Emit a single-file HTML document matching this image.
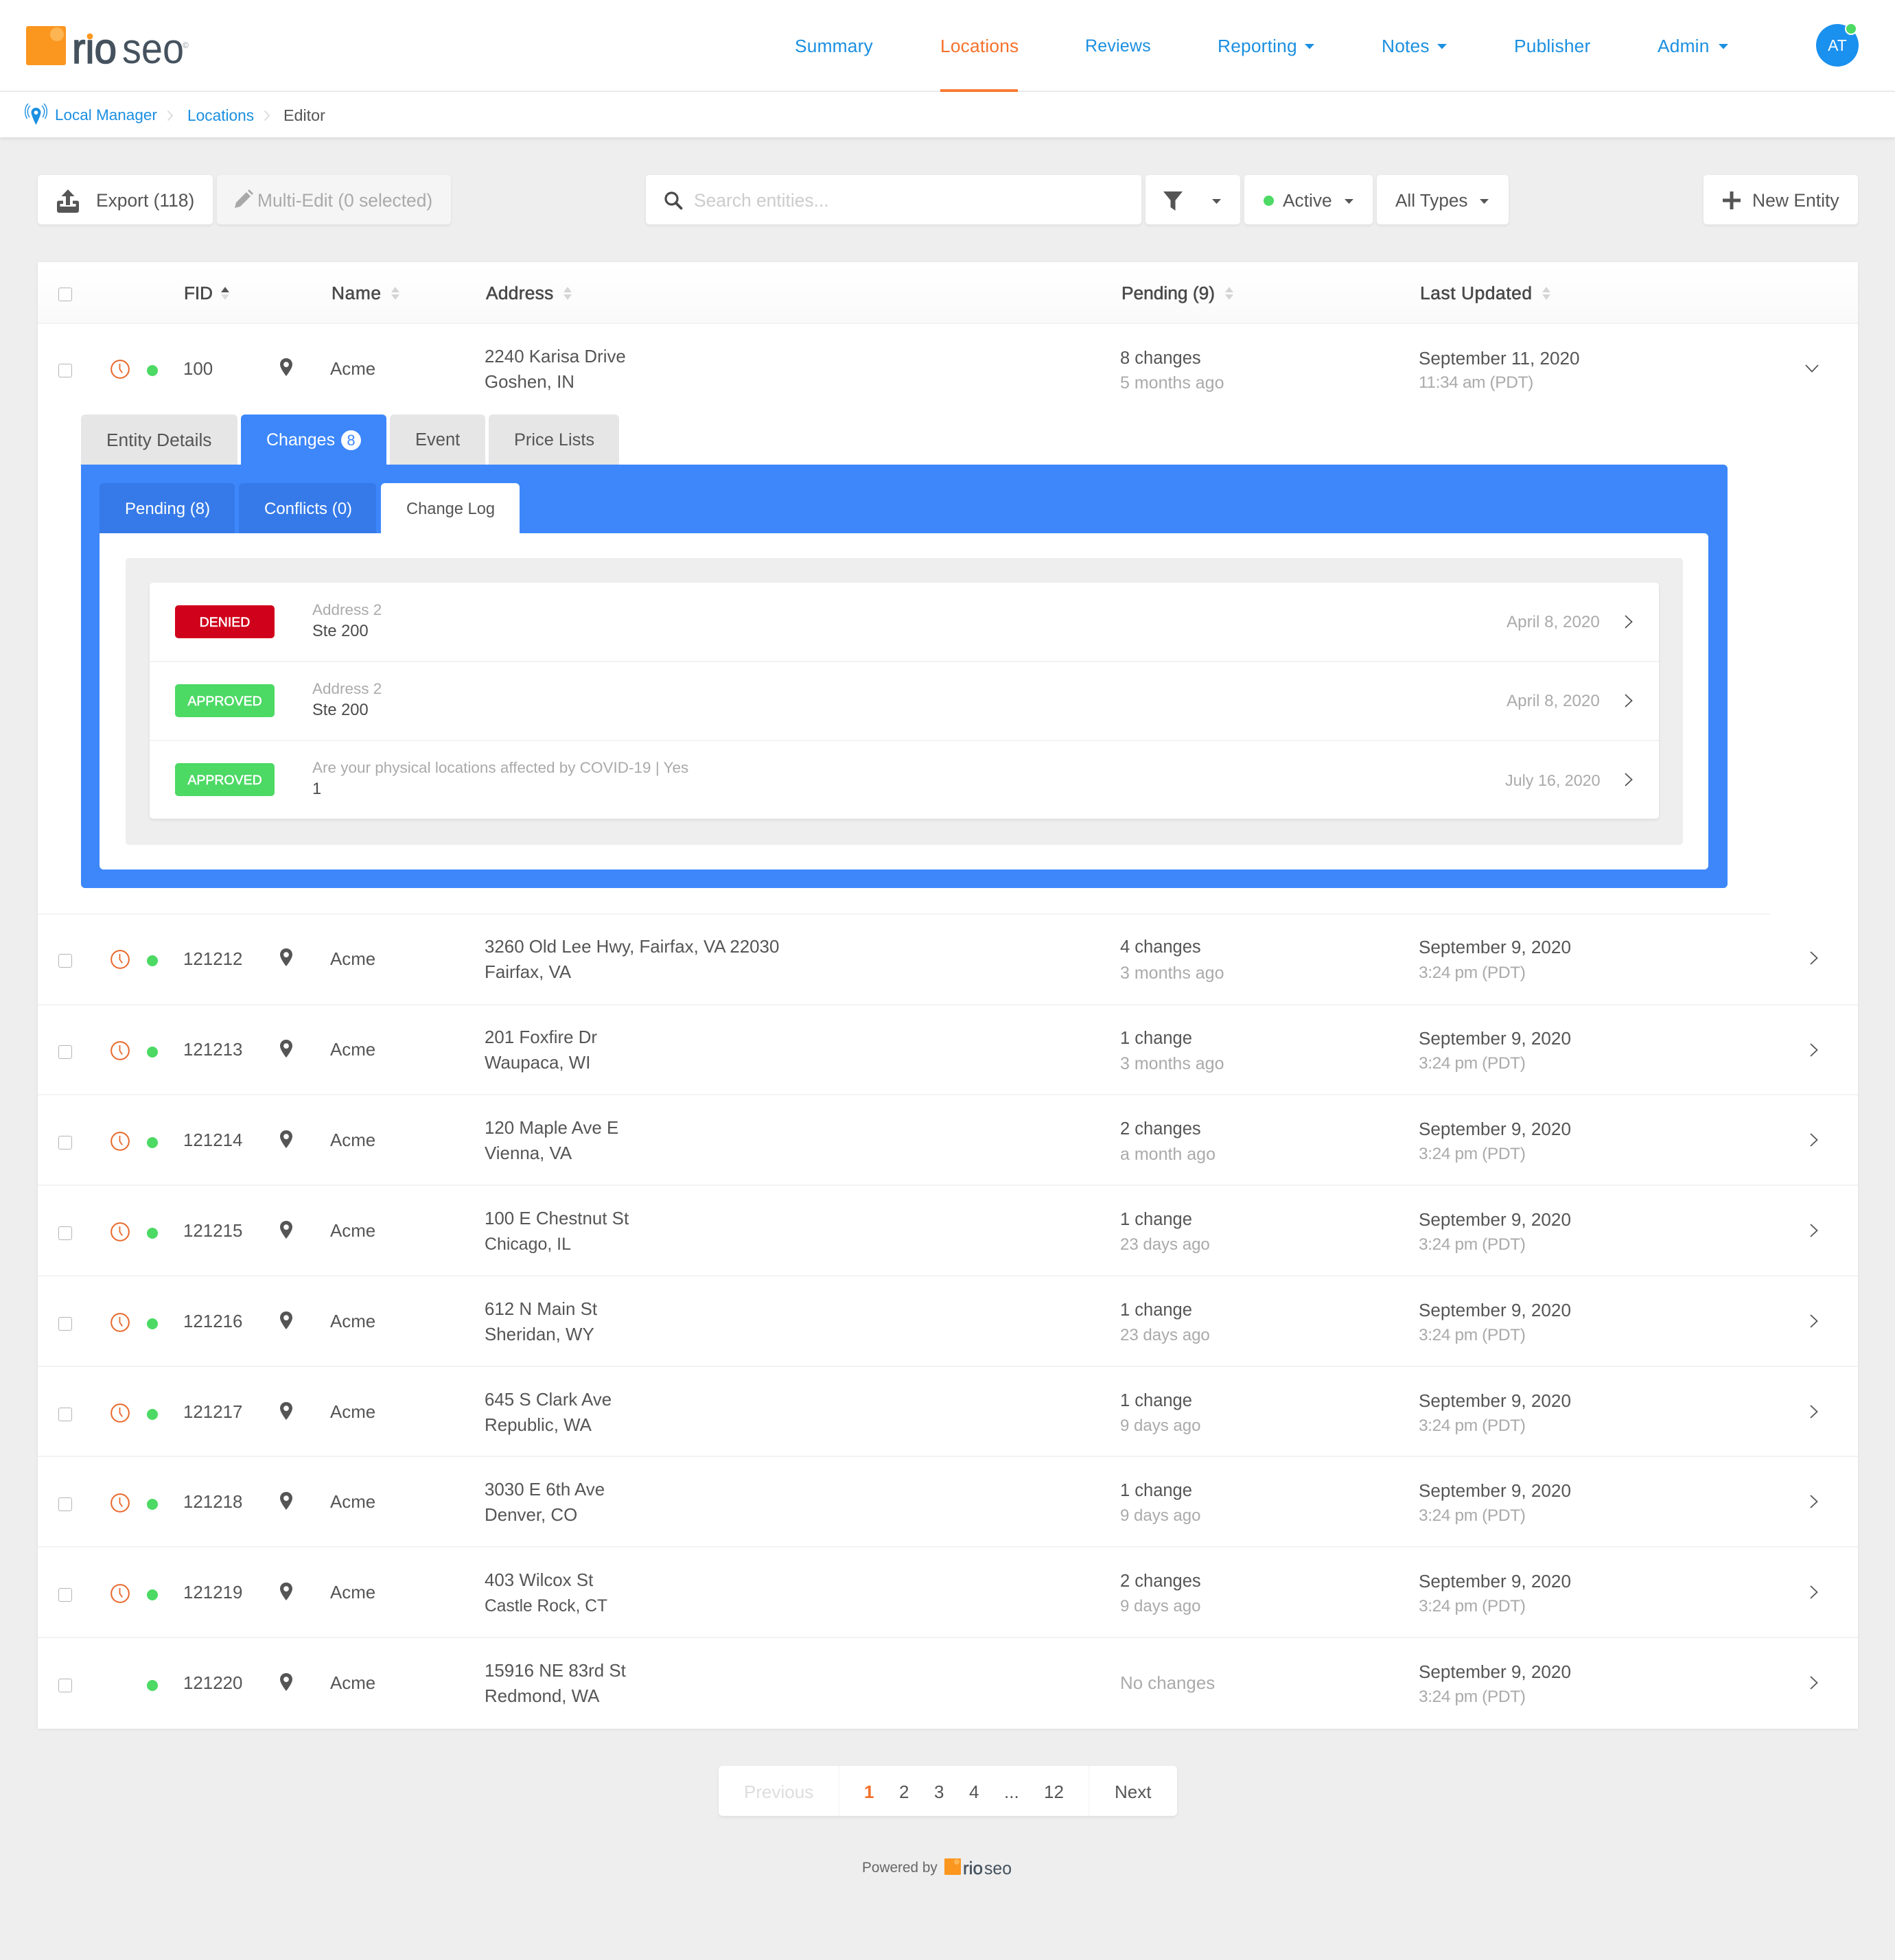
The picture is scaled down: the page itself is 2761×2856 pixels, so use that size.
<!DOCTYPE html>
<html lang="en"><head><meta charset="utf-8"><title>Locations Editor</title>
<style>
*{box-sizing:border-box}
html,body{margin:0;padding:0}
body{width:2761px;height:2856px;background:#eee;position:relative;overflow:hidden;font-family:"Liberation Sans",sans-serif;font-size:26px;color:#555}
.a{position:absolute}
.t{position:absolute;line-height:36px;height:36px;white-space:nowrap}
.btn{position:absolute;top:255px;height:72px;background:#fff;border-radius:5px;box-shadow:0 2px 5px rgba(0,0,0,.07)}
.nav{color:#1b8fe0;top:49px;font-size:26.3px;letter-spacing:.2px}
.bc{font-size:22.7px;top:150px;color:#1b8fe0}
.g{color:#aaa}
.h{top:409px;color:#4a4a4a;-webkit-text-stroke:.6px #4a4a4a;font-size:26.3px}
.cb{position:absolute;left:85px;width:20px;height:20px;border:1.5px solid #b5b5b5;border-radius:3px;background:#fff}
.row{position:absolute;left:55px;width:2652px;height:132px;border-top:2px solid #f3f3f3}
.row .t{font-size:25.9px}
.row .cb{left:30px;top:59px}
.row svg{position:absolute}
.clk{left:105px;top:52px}
.dot{position:absolute;left:159px;top:61px;width:16px;height:16px;border-radius:50%;background:#4cd964}
.fid{left:212px;top:48px}
.pin{left:352px;top:51px}
.nm{left:426px;top:48px}
.a1{left:651px;top:30px}
.a2{left:651px;top:67px}
.row .p1{left:1577px;top:31px;font-size:25.5px}
.row .p2{left:1577px;top:68px;color:#aaa;font-size:25px}
.row .d{font-size:24px}
.row .u1{left:2012px;top:31px;font-size:26.1px}
.row .u2{left:2012px;top:68px;color:#aaa;font-size:24.5px;letter-spacing:-.4px}
.chv{left:2581px;top:54px}
.tab{position:absolute;top:604px;height:73px;background:#e6e6e6;border-radius:6px 6px 0 0}
.sub{position:absolute;top:704px;height:73px;background:#357ae8;border-radius:6px 6px 0 0}
.bdg{position:absolute;left:255px;width:145px;height:48px;border-radius:5px;color:#fff;font-size:19.5px;line-height:50px;text-align:center;-webkit-text-stroke:.5px #fff}
.lb{left:455px;font-size:22.5px;color:#aaa}
.vl{left:455px;font-size:23.7px;color:#4a4a4a}
.dt{font-size:24.2px;color:#aaa}
</style></head>
<body>
<svg width="0" height="0" style="position:absolute">
<defs>
<symbol id="clock" viewBox="0 0 28 28"><circle cx="14" cy="14" r="12" fill="none" stroke="#e8692d" stroke-width="1.9"/><path d="M13.500 6.500V14l3.500 5" fill="none" stroke="#e8692d" stroke-width="1.700"/></symbol>
<symbol id="pin" viewBox="0 0 20 26"><path fill-rule="evenodd" fill="#555" d="M10 0C4.6 0 1 4 1 9c0 6 9 17 9 17s9-11 9-17c0-5-3.6-9-9-9zm0 5.2a3.9 3.9 0 1 1 0 7.8 3.9 3.9 0 0 1 0-7.8z"/></symbol>
<symbol id="right" viewBox="0 0 14 22"><path d="M2 2l9.500 9L2 20" fill="none" stroke="#555" stroke-width="1.800"/></symbol>
</defs>
</svg>

<!-- header -->
<div class="a" style="left:0;top:0;width:2761px;height:132px;background:#fff"></div>
<div class="a" style="left:0;top:132px;width:2761px;height:2px;background:#eee"></div>
<div class="a" style="left:0;top:134px;width:2761px;height:66px;background:#fff;box-shadow:0 2px 6px rgba(0,0,0,.09)"></div>

<svg class="a" style="left:30px;top:30px" width="260" height="80" viewBox="30 30 260 80">
<rect x="38" y="38" width="58" height="57" rx="3" fill="#fb961f"/>
<circle cx="83" cy="50" r="10" fill="#fcb552"/>
<text x="105" y="92" font-family="Liberation Sans" font-size="62" fill="#45525e" stroke="#45525e" stroke-width="1.6" textLength="65" lengthAdjust="spacingAndGlyphs">rio</text>
<rect x="124" y="40" width="14" height="16" fill="#fff"/>
<circle cx="131" cy="53" r="4.4" fill="#fb961f"/>
<text x="178" y="92" font-family="Liberation Sans" font-size="62" fill="#45525e" textLength="90" lengthAdjust="spacingAndGlyphs">seo</text>
<text x="266" y="70" font-family="Liberation Sans" font-size="12" fill="#8d959c">©</text>
</svg>

<span class="t nav" style="left:1158px">Summary</span>
<span class="t nav" style="left:1370px;color:#f5702a">Locations</span>
<div class="a" style="left:1370px;top:130px;width:113px;height:4px;background:#f97a32"></div>
<span class="t nav" style="left:1581px;font-size:25px">Reviews</span>
<span class="t nav" style="left:1774px">Reporting</span>
<svg class="a" style="left:1901px;top:64px" width="14" height="8"><path d="M0 0h14L7 7.500z" fill="#1b8fe0"/></svg>
<span class="t nav" style="left:2013px">Notes</span>
<svg class="a" style="left:2094px;top:64px" width="14" height="8"><path d="M0 0h14L7 7.500z" fill="#1b8fe0"/></svg>
<span class="t nav" style="left:2206px">Publisher</span>
<span class="t nav" style="left:2415px">Admin</span>
<svg class="a" style="left:2504px;top:64px" width="14" height="8"><path d="M0 0h14L7 7.500z" fill="#1b8fe0"/></svg>
<div class="a" style="left:2646px;top:35px;width:62px;height:62px;border-radius:50%;background:#1a90ef;color:#fff;font-size:23px;line-height:62px;text-align:center">AT</div>
<div class="a" style="left:2688px;top:33px;width:18px;height:18px;border-radius:50%;background:#4cd964;border:2px solid #fff"></div>

<!-- breadcrumb -->
<svg class="a" style="left:36px;top:150px" width="34" height="34" viewBox="0 0 34 34">
<path fill-rule="evenodd" fill="#1b8fe0" d="M16.500 7C12.500 7 9.500 10 9.500 13.800c0 4.500 7 18.200 7 18.200s7-13.700 7-18.200C23.500 10 20.500 7 16.500 7zm0 4.200a2.900 2.900 0 1 1 0 5.800 2.900 2.900 0 0 1 0-5.800z"/>
<path d="M7 21C3 15 3.500 8 8 4M3.500 23C-1 15 0 6 5 1M26 21c4-6 3.500-13-1-17M29.500 23c4.500-8 3.500-17-1.500-22" fill="none" stroke="#1b8fe0" stroke-width="1.400"/>
</svg>
<span class="t bc" style="left:80px;font-size:22.5px">Local Manager</span>
<svg class="a" style="left:243px;top:160px" width="10" height="17"><path d="M1.500 1.500l6.500 7-6.500 7" fill="none" stroke="#d5d5d5" stroke-width="1.600"/></svg>
<span class="t bc" style="left:273px">Locations</span>
<svg class="a" style="left:384px;top:160px" width="10" height="17"><path d="M1.500 1.500l6.500 7-6.500 7" fill="none" stroke="#d5d5d5" stroke-width="1.600"/></svg>
<span class="t bc" style="left:413px;color:#555;font-size:23.3px">Editor</span>

<!-- toolbar -->
<div class="btn" style="left:55px;width:255px"></div>
<svg class="a" style="left:81px;top:275px" width="36" height="36" viewBox="0 0 36 36">
<path fill="#555" d="M18 1l9.500 10H21v13h-6V11H8.500z"/>
<path fill="#555" d="M2 20a2.500 2.500 0 0 1 2.500-2.500H11V22H6.500v4h23v-4H25v-4.500h6.500A2.500 2.500 0 0 1 34 20v12a3 3 0 0 1-3 3H5a3 3 0 0 1-3-3z"/>
</svg>
<span class="t" style="left:140px;top:274px;font-size:26.4px">Export (118)</span>
<div class="btn" style="left:316px;width:341px;background:#f5f5f5"></div>
<svg class="a" style="left:341px;top:276px" width="28" height="28" viewBox="0 0 28 28"><path fill="#a8a8a8" d="M1 27l2-8L18 4l6 6L9 25zM20 2l2-2 6 6-2 2z"/></svg>
<span class="t g" style="left:375px;top:274px;font-size:26.4px">Multi-Edit (0 selected)</span>

<div class="btn" style="left:941px;width:722px"></div>
<svg class="a" style="left:967px;top:278px" width="28" height="28" viewBox="0 0 28 28"><circle cx="11.500" cy="11.500" r="8.500" fill="none" stroke="#4a4a4a" stroke-width="3.200"/><path d="M17.500 17.500l8 8" stroke="#4a4a4a" stroke-width="3.800" stroke-linecap="round"/></svg>
<span class="t" style="left:1011px;top:274px;color:#ccc;font-size:26.4px">Search entities...</span>

<div class="btn" style="left:1669px;width:138px"></div>
<svg class="a" style="left:1695px;top:279px" width="28" height="28" viewBox="0 0 28 28"><path fill="#555" d="M0 0h28L17.500 13v15l-7-5V13z"/></svg>
<svg class="a" style="left:1766px;top:290px" width="13" height="8"><path d="M0 0h13L6.500 7z" fill="#555"/></svg>

<div class="btn" style="left:1813px;width:187px"></div>
<div class="a" style="left:1841px;top:285px;width:15px;height:15px;border-radius:50%;background:#4cd964"></div>
<span class="t" style="left:1869px;top:274px;font-size:26.3px">Active</span>
<svg class="a" style="left:1959px;top:290px" width="13" height="8"><path d="M0 0h13L6.500 7z" fill="#555"/></svg>

<div class="btn" style="left:2006px;width:192px"></div>
<span class="t" style="left:2033px;top:274px;font-size:26.1px">All Types</span>
<svg class="a" style="left:2156px;top:290px" width="13" height="8"><path d="M0 0h13L6.500 7z" fill="#555"/></svg>

<div class="btn" style="left:2482px;width:225px"></div>
<svg class="a" style="left:2510px;top:279px" width="26" height="26" viewBox="0 0 26 26"><path fill="#555" d="M10.500 0h5v10.500H26v5H15.500V26h-5V15.500H0v-5h10.500z"/></svg>
<span class="t" style="left:2553px;top:274px;font-size:26.5px">New Entity</span>

<!-- table -->
<div class="a" style="left:55px;top:382px;width:2652px;height:2137px;background:#fff;box-shadow:0 1px 4px rgba(0,0,0,.08)"></div>
<div class="a" style="left:55px;top:382px;width:2652px;height:90px;background:linear-gradient(#fff,#fafafa);border-bottom:2px solid #f2f2f2"></div>
<div class="cb" style="top:419px"></div>
<span class="t h" style="left:268px;font-size:26px">FID</span>
<svg class="a" style="left:321px;top:418px" width="14" height="20"><path d="M7 0l6 8H1z" fill="#555"/><path d="M7 19l6-8H1z" fill="#ddd"/></svg>
<span class="t h" style="left:483px;letter-spacing:.6px">Name</span>
<svg class="a" style="left:569px;top:418px" width="14" height="20"><path d="M7 0l6 8H1z" fill="#d5d5d5"/><path d="M7 19l6-8H1z" fill="#d5d5d5"/></svg>
<span class="t h" style="left:708px;letter-spacing:.3px">Address</span>
<svg class="a" style="left:820px;top:418px" width="14" height="20"><path d="M7 0l6 8H1z" fill="#d5d5d5"/><path d="M7 19l6-8H1z" fill="#d5d5d5"/></svg>
<span class="t h" style="left:1634px">Pending (9)</span>
<svg class="a" style="left:1784px;top:418px" width="14" height="20"><path d="M7 0l6 8H1z" fill="#d5d5d5"/><path d="M7 19l6-8H1z" fill="#d5d5d5"/></svg>
<span class="t h" style="left:2069px;letter-spacing:.6px">Last Updated</span>
<svg class="a" style="left:2246px;top:418px" width="14" height="20"><path d="M7 0l6 8H1z" fill="#d5d5d5"/><path d="M7 19l6-8H1z" fill="#d5d5d5"/></svg>

<!-- row 1 -->
<div class="row" style="top:471px;border-top:0">
<div class="cb"></div>
<svg class="clk" width="30" height="30"><use href="#clock"/></svg>
<div class="dot"></div>
<span class="t fid" style="top:49px">100</span>
<svg class="pin" width="20" height="26"><use href="#pin"/></svg>
<span class="t nm" style="top:49px">Acme</span>
<span class="t a1" style="top:31px">2240 Karisa Drive</span><span class="t a2" style="top:68px">Goshen, IN</span>
<span class="t p1" style="top:33px">8 changes</span><span class="t p2" style="top:69px">5 months ago</span>
<span class="t u1" style="top:33px">September 11, 2020</span><span class="t u2" style="top:69px">11:34 am (PDT)</span>
<svg style="left:2575px;top:60px" width="20" height="12" viewBox="0 0 20 12"><path d="M1 1l9 9.500L19 1" fill="none" stroke="#555" stroke-width="1.800"/></svg>
</div>

<!-- top tabs -->
<div class="tab" style="left:118px;width:228px"></div>
<span class="t" style="left:155px;top:623px;font-size:26.3px">Entity Details</span>
<div class="tab" style="left:351px;width:212px;background:#3d87fb"></div>
<span class="t" style="left:388px;top:623px;color:#fff;font-size:25px">Changes</span>
<div class="a" style="left:497px;top:627px;width:29px;height:29px;border-radius:50%;background:#fff;color:#3d87fb;font-size:22px;line-height:29px;text-align:center">8</div>
<div class="tab" style="left:568px;width:139px"></div>
<span class="t" style="left:605px;top:623px;font-size:25.5px">Event</span>
<div class="tab" style="left:712px;width:190px"></div>
<span class="t" style="left:749px;top:623px;font-size:25.4px">Price Lists</span>

<!-- blue panel -->
<div class="a" style="left:118px;top:677px;width:2399px;height:617px;background:#3d87fb;border-radius:0 6px 6px 6px"></div>
<div class="sub" style="left:145px;width:197px"></div>
<span class="t" style="left:182px;top:724px;color:#fff;font-size:24px">Pending (8)</span>
<div class="sub" style="left:348px;width:200px"></div>
<span class="t" style="left:385px;top:724px;color:#fff;font-size:24px">Conflicts (0)</span>
<div class="sub" style="left:555px;width:202px;background:#fff"></div>
<span class="t" style="left:592px;top:724px;font-size:23.7px">Change Log</span>
<div class="a" style="left:145px;top:777px;width:2344px;height:490px;background:#fff;border-radius:0 6px 6px 6px"></div>
<div class="a" style="left:183px;top:813px;width:2269px;height:418px;background:#eee;border-radius:5px"></div>
<div class="a" style="left:218px;top:849px;width:2199px;height:344px;background:#fff;border-radius:5px;box-shadow:0 2px 5px rgba(0,0,0,.08)"></div>
<div class="a" style="left:218px;top:963px;width:2199px;height:2px;background:#f3f3f3"></div>
<div class="a" style="left:218px;top:1078px;width:2199px;height:2px;background:#f3f3f3"></div>

<div class="bdg" style="top:882px;background:#d0021b">DENIED</div>
<span class="t lb" style="top:871px">Address 2</span>
<span class="t vl" style="top:902px">Ste 200</span>
<span class="t dt" style="left:2195px;top:889px">April 8, 2020</span>
<svg class="a" style="left:2366px;top:895px" width="14" height="22"><use href="#right"/></svg>

<div class="bdg" style="top:997px;background:#4cd964">APPROVED</div>
<span class="t lb" style="top:986px">Address 2</span>
<span class="t vl" style="top:1017px">Ste 200</span>
<span class="t dt" style="left:2195px;top:1004px">April 8, 2020</span>
<svg class="a" style="left:2366px;top:1010px" width="14" height="22"><use href="#right"/></svg>

<div class="bdg" style="top:1112px;background:#4cd964">APPROVED</div>
<span class="t lb" style="top:1101px">Are your physical locations affected by COVID-19 | Yes</span>
<span class="t vl" style="top:1132px">1</span>
<span class="t dt" style="left:2193px;top:1119px;font-size:23.3px">July 16, 2020</span>
<svg class="a" style="left:2366px;top:1125px" width="14" height="22"><use href="#right"/></svg>

<!-- rows -->
<div class="row" style="top:1331px;border-top:0"><div class="a" style="left:0;top:0;width:2524px;height:2px;background:#f3f3f3"></div>
<div class="cb"></div><svg class="clk" width="30" height="30"><use href="#clock"/></svg><div class="dot"></div><span class="t fid" style="top:49px">121212</span><svg class="pin" width="20" height="26"><use href="#pin"/></svg><span class="t nm" style="top:49px">Acme</span>
<span class="t a1" style="top:31px">3260 Old Lee Hwy, Fairfax, VA 22030</span><span class="t a2" style="top:68px">Fairfax, VA</span><span class="t p1">4 changes</span><span class="t p2" style="top:69px">3 months ago</span><span class="t u1">September 9, 2020</span><span class="t u2" style="top:69px">3:24 pm (PDT)</span>
<svg class="chv" width="14" height="22"><use href="#right"/></svg></div>

<div class="row" style="top:1463px">
<div class="cb" style="top:58px"></div><svg class="clk" style="top:51px" width="30" height="30"><use href="#clock"/></svg><div class="dot" style="top:60px"></div><span class="t fid" style="top:47px">121213</span><svg class="pin" style="top:50px" width="20" height="26"><use href="#pin"/></svg><span class="t nm" style="top:47px">Acme</span>
<span class="t a1" style="top:29px">201 Foxfire Dr</span><span class="t a2" style="top:66px">Waupaca, WI</span><span class="t p1" style="top:30px">1 change</span><span class="t p2" style="top:67px">3 months ago</span><span class="t u1" style="top:30px">September 9, 2020</span><span class="t u2" style="top:67px">3:24 pm (PDT)</span>
<svg class="chv" width="14" height="22"><use href="#right"/></svg></div>

<div class="row" style="top:1594px">
<div class="cb"></div><svg class="clk" width="30" height="30"><use href="#clock"/></svg><div class="dot"></div><span class="t fid">121214</span><svg class="pin" width="20" height="26"><use href="#pin"/></svg><span class="t nm">Acme</span>
<span class="t a1">120 Maple Ave E</span><span class="t a2">Vienna, VA</span><span class="t p1">2 changes</span><span class="t p2">a month ago</span><span class="t u1">September 9, 2020</span><span class="t u2">3:24 pm (PDT)</span>
<svg class="chv" width="14" height="22"><use href="#right"/></svg></div>

<div class="row" style="top:1726px">
<div class="cb"></div><svg class="clk" width="30" height="30"><use href="#clock"/></svg><div class="dot"></div><span class="t fid">121215</span><svg class="pin" width="20" height="26"><use href="#pin"/></svg><span class="t nm">Acme</span>
<span class="t a1">100 E Chestnut St</span><span class="t a2" style="font-size:24.9px">Chicago, IL</span><span class="t p1">1 change</span><span class="t p2 d">23 days ago</span><span class="t u1">September 9, 2020</span><span class="t u2">3:24 pm (PDT)</span>
<svg class="chv" width="14" height="22"><use href="#right"/></svg></div>

<div class="row" style="top:1858px">
<div class="cb"></div><svg class="clk" width="30" height="30"><use href="#clock"/></svg><div class="dot"></div><span class="t fid">121216</span><svg class="pin" width="20" height="26"><use href="#pin"/></svg><span class="t nm">Acme</span>
<span class="t a1">612 N Main St</span><span class="t a2">Sheridan, WY</span><span class="t p1">1 change</span><span class="t p2 d">23 days ago</span><span class="t u1">September 9, 2020</span><span class="t u2">3:24 pm (PDT)</span>
<svg class="chv" width="14" height="22"><use href="#right"/></svg></div>

<div class="row" style="top:1990px">
<div class="cb"></div><svg class="clk" width="30" height="30"><use href="#clock"/></svg><div class="dot"></div><span class="t fid">121217</span><svg class="pin" width="20" height="26"><use href="#pin"/></svg><span class="t nm">Acme</span>
<span class="t a1">645 S Clark Ave</span><span class="t a2">Republic, WA</span><span class="t p1">1 change</span><span class="t p2 d">9 days ago</span><span class="t u1">September 9, 2020</span><span class="t u2">3:24 pm (PDT)</span>
<svg class="chv" width="14" height="22"><use href="#right"/></svg></div>

<div class="row" style="top:2121px">
<div class="cb"></div><svg class="clk" width="30" height="30"><use href="#clock"/></svg><div class="dot"></div><span class="t fid">121218</span><svg class="pin" width="20" height="26"><use href="#pin"/></svg><span class="t nm">Acme</span>
<span class="t a1">3030 E 6th Ave</span><span class="t a2">Denver, CO</span><span class="t p1">1 change</span><span class="t p2 d">9 days ago</span><span class="t u1">September 9, 2020</span><span class="t u2">3:24 pm (PDT)</span>
<svg class="chv" width="14" height="22"><use href="#right"/></svg></div>

<div class="row" style="top:2253px">
<div class="cb"></div><svg class="clk" width="30" height="30"><use href="#clock"/></svg><div class="dot"></div><span class="t fid">121219</span><svg class="pin" width="20" height="26"><use href="#pin"/></svg><span class="t nm">Acme</span>
<span class="t a1">403 Wilcox St</span><span class="t a2" style="font-size:24.6px;top:68px">Castle Rock, CT</span><span class="t p1">2 changes</span><span class="t p2 d">9 days ago</span><span class="t u1">September 9, 2020</span><span class="t u2">3:24 pm (PDT)</span>
<svg class="chv" width="14" height="22"><use href="#right"/></svg></div>

<div class="row" style="top:2385px;height:134px">
<div class="cb"></div><div class="dot"></div><span class="t fid">121220</span><svg class="pin" width="20" height="26"><use href="#pin"/></svg><span class="t nm">Acme</span>
<span class="t a1">15916 NE 83rd St</span><span class="t a2">Redmond, WA</span><span class="t p1" style="top:48px;color:#aaa;font-size:25.9px">No changes</span><span class="t u1">September 9, 2020</span><span class="t u2">3:24 pm (PDT)</span>
<svg class="chv" width="14" height="22"><use href="#right"/></svg></div>

<!-- pagination -->
<div class="a" style="left:1047px;top:2573px;width:668px;height:73px;background:#fff;border-radius:6px;box-shadow:0 2px 5px rgba(0,0,0,.07)"></div>
<div class="a" style="left:1222px;top:2573px;width:1px;height:73px;background:#f3f3f3"></div>
<div class="a" style="left:1586px;top:2573px;width:1px;height:73px;background:#f3f3f3"></div>
<span class="t" style="left:1084px;top:2593px;color:#ddd">Previous</span>
<span class="t" style="left:1259px;top:2593px;color:#f5702a;font-weight:bold">1</span>
<span class="t" style="left:1310px;top:2593px">2</span>
<span class="t" style="left:1361px;top:2593px">3</span>
<span class="t" style="left:1412px;top:2593px">4</span>
<span class="t" style="left:1463px;top:2593px">...</span>
<span class="t" style="left:1521px;top:2593px">12</span>
<span class="t" style="left:1624px;top:2593px">Next</span>

<!-- footer -->
<span class="t" style="left:1256px;top:2704px;font-size:20.8px;color:#666">Powered by</span>
<svg class="a" style="left:1370px;top:2700px" width="110" height="40" viewBox="1370 2700 110 40">
<rect x="1376" y="2708" width="24" height="24" rx="1" fill="#fb961f"/>
<circle cx="1394" cy="2713" r="4" fill="#fcb552"/>
<text x="1403" y="2731" font-family="Liberation Sans" font-size="26" fill="#45525e" stroke="#45525e" stroke-width=".5" textLength="29" lengthAdjust="spacingAndGlyphs">rio</text>
<text x="1434" y="2731" font-family="Liberation Sans" font-size="26" fill="#45525e" textLength="40" lengthAdjust="spacingAndGlyphs">seo</text>
</svg>
</body></html>
